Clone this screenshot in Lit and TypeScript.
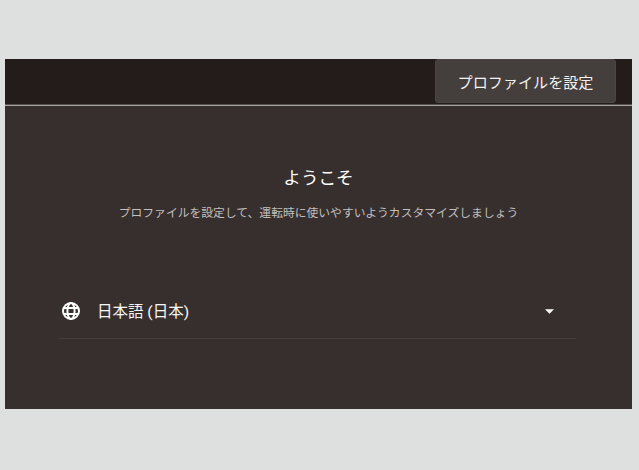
import { LitElement, html, css } from "lit";
import { customElement } from "lit/decorators.js";

@customElement("app-root")
export class AppRoot extends LitElement {
  static styles = css`
    :host {
      display: block;
      width: 639px;
      height: 470px;
      background: #dee0df;
      font-family: "Roboto", "Noto Sans CJK JP", sans-serif;
      padding: 59px 7px 0 5px;
      box-sizing: border-box;
    }
    .screen {
      height: 350px;
      background: #372f2e;
      display: flex;
      flex-direction: column;
    }
    .top {
      height: 47px;
      box-sizing: border-box;
      background: #241c1a;
      border-bottom: 1px solid #a6a3a1;
      box-shadow: inset 0 -1px 0 #55504e;
      display: flex;
      justify-content: flex-end;
      align-items: flex-start;
      padding-right: 16px;
    }
    .setup {
      width: 181px;
      height: 44px;
      box-sizing: border-box;
      border: 1px solid #4a4443;
      border-radius: 3px;
      background: #443e3d;
      color: #f3f2f1;
      font: inherit;
      font-size: 15.1px;
      margin: 0;
      padding: 0 0 1px;
    }
    .welcome {
      display: flex;
      flex-direction: column;
      align-items: center;
    }
    h1 {
      margin: 62px 0 0;
      font-size: 17.6px;
      line-height: 20px;
      font-weight: 400;
      color: #fff;
    }
    p {
      margin: 17px 0 0;
      font-size: 11.8px;
      line-height: 16px;
      color: #c2bfbe;
    }
    .lang {
      margin: 62px 56px 0 54px;
      height: 56px;
      box-sizing: border-box;
      border-bottom: 1px solid #433c3a;
      display: flex;
      align-items: center;
      color: #f7f6f6;
      font-size: 15.5px;
    }
    .globe {
      width: 22px;
      height: 22px;
      margin: 0 15.5px 0 0.5px;
      flex: none;
    }
    .lang span {
      flex: 1;
      padding-bottom: 2px;
    }
    .caret {
      width: 9px;
      height: 5px;
      margin: 2px 22px 0 0;
    }
  `;
  render() {
    return html`
      <div class="screen">
        <div class="top"><button class="setup">プロファイルを設定</button></div>
        <div class="welcome">
          <h1>ようこそ</h1>
          <p>プロファイルを設定して、運転時に使いやすいようカスタマイズしましょう</p>
        </div>
        <div class="lang">
          <svg class="globe" viewBox="0 0 22 22" fill="none" stroke="#fff" stroke-width="2">
            <circle cx="11" cy="11" r="8" />
            <ellipse cx="11" cy="11" rx="3.6" ry="8" />
            <path d="M3.6 8h14.8M3.6 14h14.8" />
          </svg>
          <span>日本語 (日本)</span>
          <svg class="caret" viewBox="0 0 10 5" fill="#fff"><path d="M0 0l5 5 5-5z" /></svg>
        </div>
      </div>
    `;
  }
}
